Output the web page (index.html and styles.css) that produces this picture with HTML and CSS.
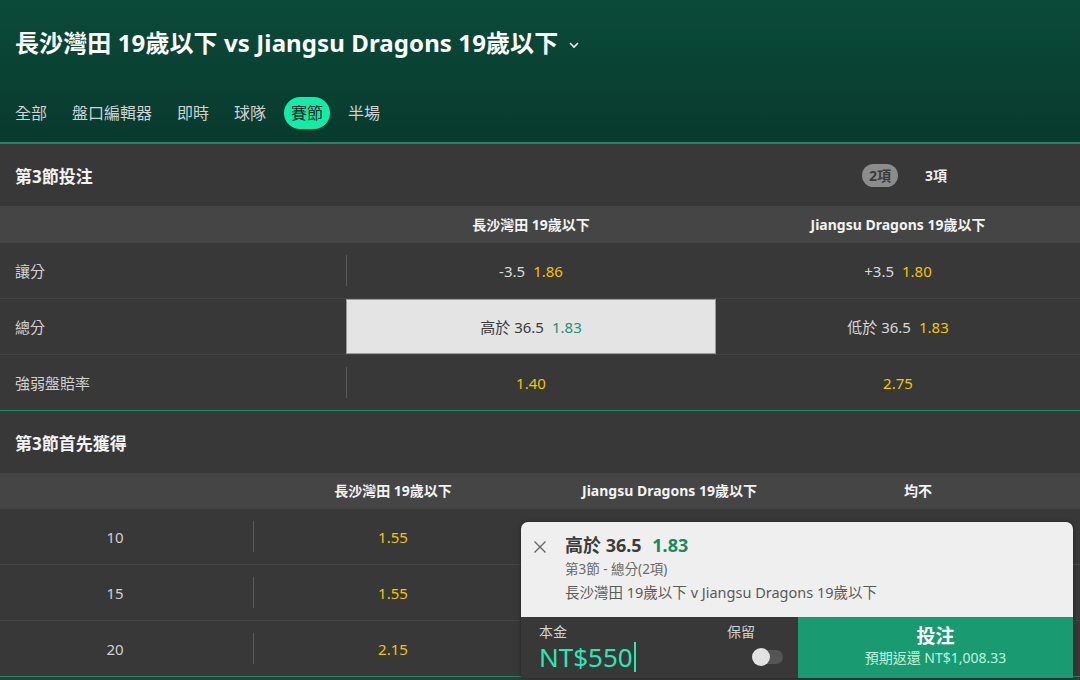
FILE: index.html
```html
<!DOCTYPE html>
<html lang="zh-Hant">
<head>
    <meta charset="UTF-8">
    <meta name="viewport" content="width=device-width, initial-scale=1.0">
    <title>長沙灣田 19歲以下 vs Jiangsu Dragons 19歲以下</title>
    <link rel="stylesheet" href="styles.css">
</head>
<body>
    <header class="event-header">
        <h1 class="event-title">長沙灣田 19歲以下 vs Jiangsu Dragons 19歲以下
            <svg class="chevron" width="12" height="8" viewBox="0 0 12 8"><path d="M2 2l4 4 4-4" fill="none" stroke="#fff" stroke-width="1.6"/></svg>
        </h1>
        <nav class="tabs">
            <a class="tab">全部</a>
            <a class="tab">盤口編輯器</a>
            <a class="tab">即時</a>
            <a class="tab">球隊</a>
            <a class="tab active">賽節</a>
            <a class="tab">半場</a>
        </nav>
    </header>

    <section class="market">
        <div class="market-head">
            <h2>第3節投注</h2>
            <div class="ways">
                <span class="way active">2項</span>
                <span class="way">3項</span>
            </div>
        </div>
        <div class="grid grid-2">
            <div class="col-head"></div>
            <div class="col-head">長沙灣田 19歲以下</div>
            <div class="col-head">Jiangsu Dragons 19歲以下</div>

            <div class="row-label">讓分</div>
            <div class="cell first"><span class="line">-3.5</span><span class="odds">1.86</span></div>
            <div class="cell"><span class="line">+3.5</span><span class="odds">1.80</span></div>

            <div class="row-label">總分</div>
            <div class="cell first selected"><span class="line">高於 36.5</span><span class="odds">1.83</span></div>
            <div class="cell"><span class="line">低於 36.5</span><span class="odds">1.83</span></div>

            <div class="row-label last">強弱盤賠率</div>
            <div class="cell first last"><span class="odds">1.40</span></div>
            <div class="cell last"><span class="odds">2.75</span></div>
        </div>
    </section>

    <section class="market">
        <div class="market-head">
            <h2>第3節首先獲得</h2>
        </div>
        <div class="grid grid-4">
            <div class="col-head"></div>
            <div class="col-head">長沙灣田 19歲以下</div>
            <div class="col-head">Jiangsu Dragons 19歲以下</div>
            <div class="col-head">均不</div>

            <div class="row-num">10</div>
            <div class="cell first"><span class="odds">1.55</span></div>
            <div class="cell"></div>
            <div class="cell"></div>

            <div class="row-num">15</div>
            <div class="cell first"><span class="odds">1.55</span></div>
            <div class="cell"></div>
            <div class="cell"></div>

            <div class="row-num last">20</div>
            <div class="cell first last"><span class="odds">2.15</span></div>
            <div class="cell last"></div>
            <div class="cell last"></div>
        </div>
    </section>

    <!-- bet slip floating over the markets -->
    <div class="betslip">
        <div class="pick">
            <svg class="close" width="14" height="14" viewBox="0 0 14 14"><path d="M1.5 1.5l11 11M12.5 1.5l-11 11" stroke="#666" stroke-width="1.4"/></svg>
            <div class="pick-info">
                <div class="pick-title">高於 36.5 <span class="pick-odds">1.83</span></div>
                <div class="pick-market">第3節 - 總分(2項)</div>
                <div class="pick-event">長沙灣田 19歲以下 v Jiangsu Dragons 19歲以下</div>
            </div>
        </div>
        <div class="stake-bar">
            <div class="stake">
                <div class="stake-label">本金</div>
                <div class="stake-value">NT$550<span class="caret"></span></div>
            </div>
            <div class="keep">
                <div class="stake-label">保留</div>
                <div class="toggle"><span class="knob"></span></div>
            </div>
            <button class="place-bet">
                <span class="place-title">投注</span>
                <span class="place-return">預期返還 NT$1,008.33</span>
            </button>
        </div>
    </div>
</body>
</html>
```

FILE: styles.css
```css
body {
    margin: 0;
    background: #383838;
    color: #d6d6d6;
    font-family: "Noto Sans", "Noto Sans CJK TC", sans-serif;
    font-size: 15px;
    width: 1080px;
    height: 680px;
    overflow: hidden;
    position: relative;
}
.event-header {
    height: 144px;
    box-sizing: border-box;
    padding: 24px 8px 0;
    background: linear-gradient(180deg, #0b4a38 0%, #083a2e 100%);
    border-bottom: 2px solid #1c8865;
}
.event-title {
    margin: 0 0 0 7px;
    font-size: 24px;
    font-weight: 700;
    color: #fff;
    line-height: 38px;
    letter-spacing: 0.1px;
    display: flex;
    align-items: center;
    gap: 10px;
}
.chevron {
    margin-top: 4px;
}
.tabs {
    display: flex;
    gap: 11px;
    margin-top: 35px;
}
.tab {
    padding: 0 7px;
    height: 32px;
    line-height: 32px;
    border-radius: 16px;
    font-size: 16px;
    color: #d2d2d2;
}
.tab.active {
    background: #14eba8;
    color: #0d2b22;
}
.market {
    border-bottom: 1px solid #1d8a66;
}
.market-head {
    height: 62px;
    display: flex;
    align-items: center;
    padding: 0 15px;
}
.market-head h2 {
    margin: 0;
    font-size: 17px;
    font-weight: 700;
    color: #f2f2f2;
    flex: 1;
}
.ways {
    display: flex;
    gap: 20px;
    margin-right: 111px;
    font-size: 14px;
    font-weight: 700;
}
.way {
    height: 23px;
    line-height: 23px;
    padding: 0 7px;
    border-radius: 12px;
    color: #eee;
}
.way.active {
    background: #8c8c8c;
    color: #3a3a3a;
}
.grid {
    display: grid;
}
.grid-2 {
    grid-template-columns: 346px 370px 364px;
}
.grid-4 {
    grid-template-columns: 253px 280px 273px 224px 50px;
}
.grid-4 .col-head:nth-child(4) {
    grid-column: 4 / 6;
    padding-right: 50px;
}
.grid-4 .cell:nth-child(4n+4) {
    grid-column: span 2;
}
.col-head {
    height: 37px;
    line-height: 37px;
    background: #454545;
    text-align: center;
    font-size: 14px;
    font-weight: 700;
    color: #f2f2f2;
}
.grid-4 .col-head {
    height: 36px;
    line-height: 36px;
}
.row-label, .row-num, .cell {
    height: 55px;
    display: flex;
    align-items: center;
    border-bottom: 1px solid #444;
}
.row-label {
    padding-left: 15px;
    color: #d0d0d0;
}
.row-num {
    justify-content: center;
    padding-right: 23px;
    color: #d0d0d0;
}
.cell {
    justify-content: center;
    gap: 8px;
    position: relative;
}
.cell.first::before {
    content: "";
    position: absolute;
    left: 0;
    top: 12px;
    bottom: 12px;
    width: 1px;
    background: #5a5a5a;
}
.last {
    border-bottom: none;
}
.line {
    color: #d8d8d8;
}
.odds {
    color: #f2c500;
}
.cell.selected {
    background: #e4e4e4;
    box-shadow: inset 0 0 0 1px #9a9a9a;
}
.cell.selected::before {
    display: none;
}
.cell.selected .line {
    color: #3a3a3a;
}
.cell.selected .odds {
    color: #23917a;
}
.betslip {
    position: absolute;
    left: 521px;
    top: 522px;
    width: 552px;
    border-radius: 7px 7px 0 0;
    overflow: hidden;
    box-shadow: 0 0 4px rgba(0,0,0,0.4);
}
.pick {
    background: #efefef;
    height: 95px;
    box-sizing: border-box;
    padding: 11px 12px 0 12px;
    display: flex;
    gap: 18px;
}
.close {
    margin-top: 7px;
}
.pick-title {
    font-size: 18px;
    font-weight: 700;
    color: #3c3c3c;
    line-height: 25px;
}
.pick-odds {
    color: #178a5e;
    margin-left: 6px;
}
.pick-market {
    font-size: 13.5px;
    color: #6a6a6a;
    line-height: 22px;
}
.pick-event {
    font-size: 14.5px;
    color: #5a5a5a;
    line-height: 24px;
}
.stake-bar {
    display: flex;
    height: 61px;
    background: #383838;
}
.stake {
    width: 188px;
    padding: 6px 0 0 18px;
}
.stake-label {
    font-size: 14px;
    color: #d0d0d0;
    line-height: 18px;
}
.stake-value {
    font-size: 26px;
    color: #2ee6b4;
    line-height: 32px;
    display: flex;
    align-items: center;
}
.caret {
    width: 2px;
    height: 30px;
    background: #2ee6b4;
    margin-left: 1px;
}
.keep {
    width: 71px;
    padding: 6px 0 0 0;
    display: flex;
    flex-direction: column;
    align-items: flex-start;
}
.toggle {
    margin: 9px 0 0 27px;
    width: 29px;
    height: 14px;
    border-radius: 7px;
    background: #555;
    position: relative;
}
.knob {
    position: absolute;
    left: -2px;
    top: -2px;
    width: 18px;
    height: 18px;
    border-radius: 50%;
    background: #e2e2e2;
}
.place-bet {
    flex: 1;
    border: none;
    background: #1a9a71;
    display: flex;
    flex-direction: column;
    align-items: center;
    justify-content: center;
    font-family: inherit;
    padding: 0 0 4px;
}
.place-title {
    font-size: 19px;
    font-weight: 700;
    color: #fff;
    line-height: 25px;
}
.place-return {
    font-size: 14px;
    color: #bff3dc;
    line-height: 18px;
}
```
